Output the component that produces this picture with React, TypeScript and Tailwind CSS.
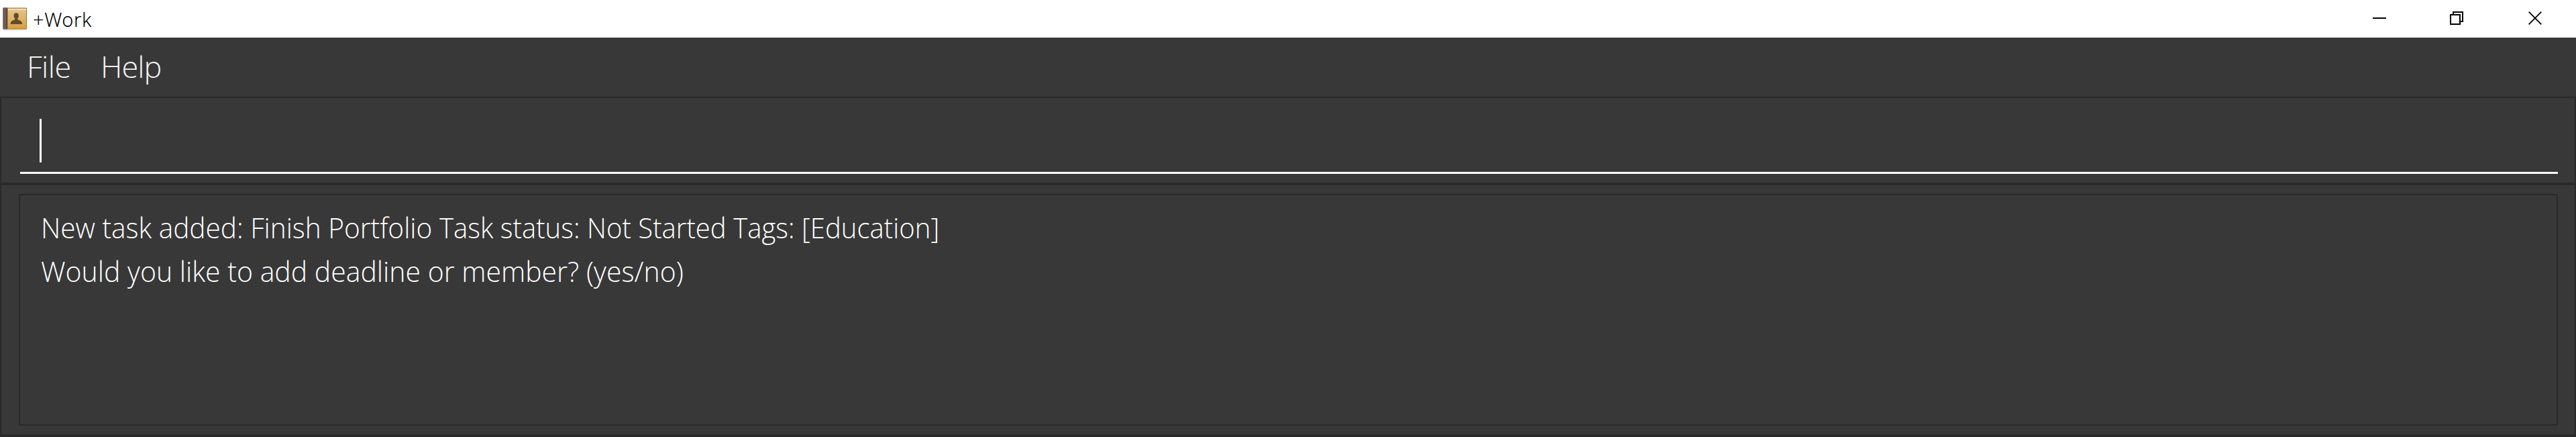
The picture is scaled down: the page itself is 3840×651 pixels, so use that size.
function BookIcon() {
  return (
    <svg width="38" height="36" viewBox="0 0 38 36" className="shrink-0">
      <defs>
        <linearGradient id="cover" x1="0" y1="0" x2="0" y2="1">
          <stop offset="0" stopColor="#e5c48b" />
          <stop offset="0.5" stopColor="#dfb46a" />
          <stop offset="1" stopColor="#d6a043" />
        </linearGradient>
        <linearGradient id="spine" x1="0" y1="0" x2="1" y2="0">
          <stop offset="0" stopColor="#5b4c47" />
          <stop offset="0.5" stopColor="#75655f" />
          <stop offset="1" stopColor="#4b3b32" />
        </linearGradient>
      </defs>
      <rect x="1" y="33" width="34" height="2.5" fill="#e4e4e4" />
      <rect x="0.5" y="1.5" width="35.5" height="32" rx="1" fill="#9a7636" />
      <rect x="7" y="2.5" width="28" height="30" fill="url(#cover)" />
      <rect x="7" y="3.5" width="28" height="1.5" fill="#f4e4c4" />
      <rect x="0.5" y="1.5" width="6.5" height="32" fill="url(#spine)" />
      <rect x="7" y="2" width="1" height="31" fill="#b98d49" />
      <path
        d="M20.2 9.2c2.4 0 3.6 1.6 3.6 4 0 2-.7 3.4-1.5 4.3v1.6c2.2 1.2 6.9 1.9 6.9 6.9H11.7c0-5 4.5-5.7 6.5-6.9v-1.6c-.9-.9-1.6-2.3-1.6-4.3 0-2.4 1.2-4 3.6-4z"
        fill="#614b2e"
      />
    </svg>
  );
}

function TitleBar() {
  return (
    <header className="flex h-14 items-center bg-white pl-1">
      <BookIcon />
      <span className="ml-[7px] mt-px font-['Noto_Sans'] text-[29px] leading-9 tracking-[0.6px] text-black">+Work</span>
      <div className="ml-auto flex h-full">
        <button className="flex w-[118px] items-start justify-center pt-[17px]">
          <svg width="20" height="20" shapeRendering="crispEdges">
            <rect y="9" width="20" height="2" fill="#000" />
          </svg>
        </button>
        <button className="flex w-[112px] items-start justify-center pt-[17px]">
          <svg width="20" height="20" fill="none" stroke="#000" strokeWidth="2" shapeRendering="crispEdges">
            <path d="M5 5V1H19V15H15" />
            <path d="M1 5H15V19H1Z" />
          </svg>
        </button>
        <button className="flex w-[122px] items-start justify-center pt-[17px]">
          <svg width="20" height="20" fill="none" stroke="#000" strokeWidth="1.8">
            <path d="M.7 .7 19.3 19.3M19.3 .7 .7 19.3" />
          </svg>
        </button>
      </div>
    </header>
  );
}

export default function App() {
  return (
    <div className="flex h-[651px] w-[3840px] flex-col bg-[#383838] font-['Open_Sans',sans-serif] font-light text-white">
      <TitleBar />
      <nav className="flex h-[88px] pl-[40px] text-[45px] leading-[86px] text-[#f4f4f4]">
        <span className="w-[110px] tracking-[-0.5px]">File</span>
        <span className="tracking-[-0.9px]">Help</span>
      </nav>
      <section className="h-[130px] border-2 border-[#2a2a2a] pt-[31px] pr-[25px] pl-7">
        <div className="h-[82px] border-b-[3px] border-white pl-[29px]">
          <div className="h-[65px] w-[3px] bg-white" />
        </div>
      </section>
      <section className="flex-1 border-x-2 border-t-2 border-b-4 border-[#2a2a2a] pt-[13px] pr-[25px] pb-[13px] pl-[26px]">
        <div className="h-full border-2 border-[#2a2a2a] pl-[29px] pt-[15px] text-[43px] leading-[65px]">
          <p className="flex w-max origin-left translate-x-[2px] whitespace-pre">
            <span className="w-[594px]">
              <span className="inline-block origin-left scale-x-[0.944]">New task added: Finish Portfolio </span>
            </span>
            <span className="inline-block origin-left scale-x-[0.933]">Task status: Not Started Tags: [Education]</span>
          </p>
          <p className="w-max origin-left translate-x-[2px] scale-x-[0.953] whitespace-nowrap">
            Would you like to add deadline or member? (yes/no)
          </p>
        </div>
      </section>
    </div>
  );
}
